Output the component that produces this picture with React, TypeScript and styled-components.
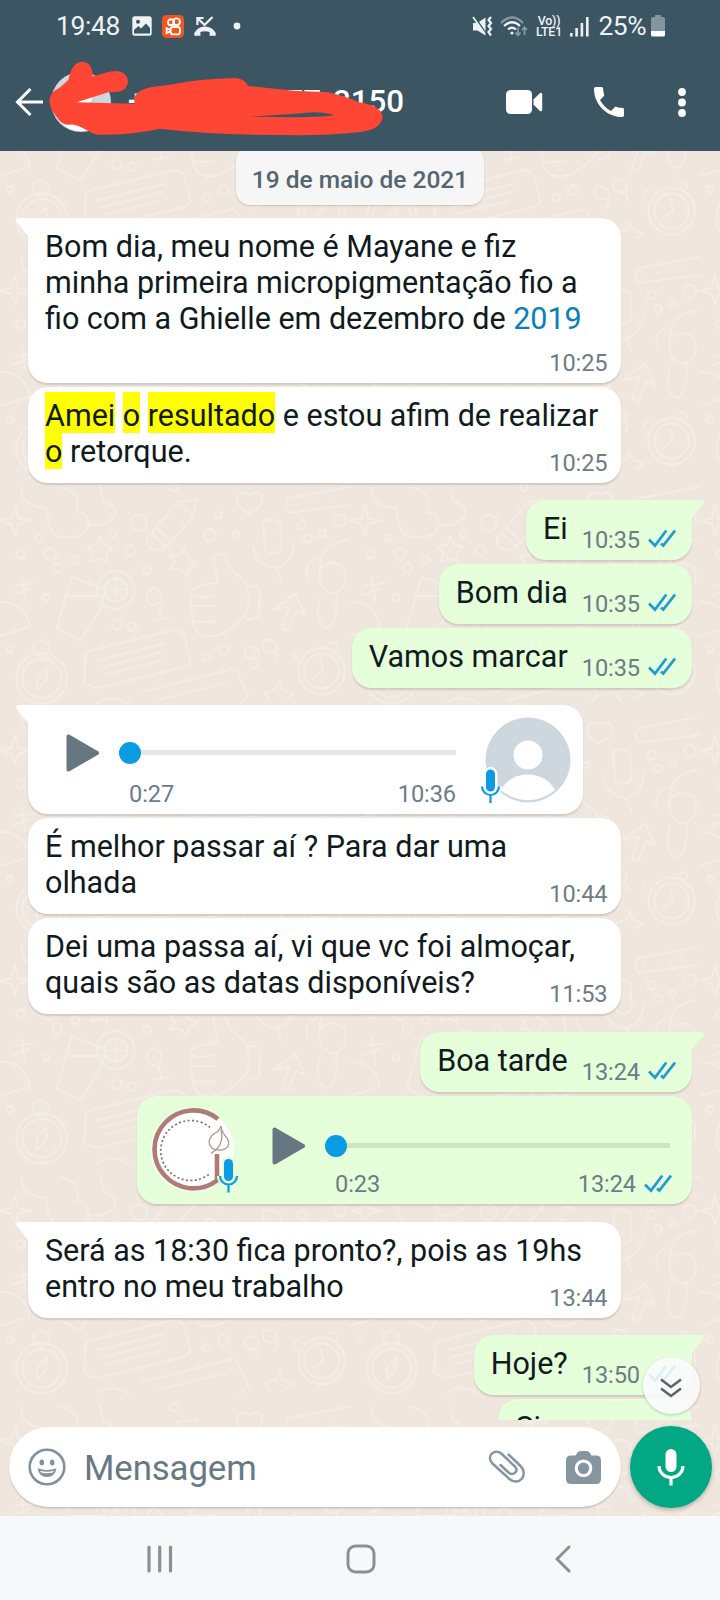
import React from 'react';
import styled, { createGlobalStyle, css } from 'styled-components';

const GlobalStyle = createGlobalStyle`
  *, *::before, *::after { box-sizing: border-box; }
  body { margin: 0; background: #f6f8fa; }
  svg { display: block; flex: none; }
`;

const Screen = styled.div`
  width: 720px;
  height: 1600px;
  display: flex;
  flex-direction: column;
  overflow: hidden;
  font-family: Roboto, 'Liberation Sans', sans-serif;
  color: #101a20;
`;

/* ---------- Header ---------- */

const Header = styled.header`
  position: relative;
  flex: none;
  height: 151px;
  background: #3b5563;
  color: #fff;
`;

const StatusBar = styled.div`
  display: flex;
  align-items: center;
  height: 52px;
  padding: 0 55px 0 56px;
  color: #eef2f4;
`;

const Clock = styled.span`
  width: 76px;
  font-size: 26.4px;
  letter-spacing: -0.35px;
`;

const StatusGroup = styled.div<{ $push?: boolean }>`
  display: flex;
  align-items: center;
  gap: 10px;
  ${(p) => p.$push && css`margin-left: auto; gap: 7px;`}
`;

const Volte = styled.div`
  display: flex;
  flex-direction: column;
  align-items: center;
  width: 27px;
  font-size: 12.4px;
  line-height: 11.5px;
  font-weight: 500;
  letter-spacing: -0.2px;
  white-space: nowrap;
`;

const BatteryText = styled.span`
  font-size: 26.4px;
  letter-spacing: -0.5px;
  margin-left: 2px;
  margin-right: -2px;
`;

const Toolbar = styled.div`
  display: flex;
  align-items: center;
  height: 99px;
  padding: 1px 34px 0 15px;
`;

const Avatar = styled.div`
  width: 60px;
  height: 60px;
  margin-left: 7px;
`;

const Title = styled.h1`
  flex: 1;
  display: flex;
  align-items: baseline;
  margin: -1px 0 0 17px;
  font-size: 31.3px;
  line-height: 40px;
  font-weight: 500;
`;

const TitlePart = styled.span<{ $gap?: number }>`
  margin-left: ${(p) => p.$gap ?? 0}px;
`;

const Actions = styled.div`
  display: flex;
  align-items: center;
`;

const Action = styled.div<{ $gap?: number }>`
  margin-left: ${(p) => p.$gap ?? 0}px;
`;

const Marker = styled.svg`
  position: absolute;
  left: 0;
  top: 0;
`;

/* ---------- Chat ---------- */

const Chat = styled.main`
  position: relative;
  flex: none;
  height: 1365px;
  background: #efe6de;
  display: flex;
  flex-direction: column;
`;

const Wallpaper = styled.svg`
  position: absolute;
  inset: 0;
`;

const Messages = styled.section`
  position: relative;
  flex: none;
  height: 1269px;
  overflow: hidden;
  display: flex;
  flex-direction: column;
  padding: 0 28px;
`;

const DatePill = styled.div`
  flex: none;
  align-self: center;
  width: 248px;
  height: 58px;
  margin-top: -4px;
  padding-top: 17px;
  border-radius: 14px;
  background: #f6f6f6;
  box-shadow: 0 1px 2px rgba(0, 0, 0, 0.16);
  color: #54656f;
  font-size: 24.5px;
  line-height: 32px;
  font-weight: 500;
  text-align: center;
  white-space: nowrap;
`;

const BubbleBox = styled.article<{ $out?: boolean; $tail?: boolean; $mt: number }>`
  position: relative;
  flex: none;
  margin-top: ${(p) => p.$mt}px;
  border-radius: 20px;
  background: ${(p) => (p.$out ? '#e4ffd9' : '#ffffff')};
  box-shadow: 0 1.5px 1.5px rgba(60, 50, 40, 0.16);
  align-self: ${(p) => (p.$out ? 'flex-end' : 'flex-start')};
  ${(p) => p.$tail && (p.$out ? 'border-top-right-radius: 0;' : 'border-top-left-radius: 0;')}
`;

const InBubble = styled(BubbleBox)<{ $h: number }>`
  display: grid;
  width: 593px;
  height: ${(p) => p.$h}px;
  padding: 10.5px 13.5px 6.5px 17px;
  > :not(svg) { grid-area: 1 / 1; }
`;

const OutBubble = styled(BubbleBox)`
  display: flex;
  height: 60px;
  padding: 10.5px 16px 6.5px 17px;
`;

const Text = styled.p`
  margin: 0;
  font-size: 30.5px;
  line-height: 36px;
  white-space: nowrap;
`;

const Mark = styled.mark`
  background: #ffff00;
  color: inherit;
  padding-top: 6px;
`;

const Link = styled.span`
  color: #0b80b8;
`;

const Time = styled.span`
  font-size: 23.6px;
  line-height: 28px;
  color: #6d7c85;
  letter-spacing: -0.1px;
`;

const Meta = styled.div`
  display: flex;
  align-self: end;
  justify-self: end;
  align-items: center;
  gap: 8px;
`;

const OutMeta = styled(Meta)`
  margin-left: 14px;
`;

const TailSvg = styled.svg<{ $out?: boolean }>`
  position: absolute;
  top: 0;
  ${(p) => (p.$out ? 'right: -12px; transform: scaleX(-1);' : 'left: -12px;')}
`;

const TickSvg = styled.svg`
  margin-bottom: 2px;
`;

const VoiceBubble = styled(BubbleBox)<{ $h: number }>`
  display: flex;
  width: 555px;
  height: ${(p) => p.$h}px;
`;

const PlaySlot = styled.div<{ $left: number; $top: number }>`
  margin-left: ${(p) => p.$left}px;
  padding-top: ${(p) => p.$top}px;
  width: 34px;
`;

const Player = styled.div<{ $w: number; $top: number }>`
  width: ${(p) => p.$w}px;
  margin-left: 30px;
  display: flex;
  flex-direction: column;
  padding-top: ${(p) => p.$top}px;
`;

const Track = styled.div<{ $out?: boolean }>`
  position: relative;
  height: 5px;
  background: ${(p) => (p.$out ? '#cde6c3' : '#e6e6e6')};
  &::before {
    content: '';
    position: absolute;
    left: -11px;
    top: -8.5px;
    width: 22px;
    height: 22px;
    border-radius: 50%;
    background: #0a9be2;
  }
`;

const PlayerTimes = styled.div<{ $top: number; $shift?: number }>`
  display: flex;
  justify-content: space-between;
  margin-top: ${(p) => p.$top}px;
  margin-left: -1px;
  margin-right: ${(p) => -(p.$shift ?? 0)}px;
`;

const VoiceAvatar = styled.div<{ $left: number; $top: number }>`
  margin-left: ${(p) => p.$left}px;
  margin-top: ${(p) => p.$top}px;
`;

const ScrollDown = styled.div`
  position: absolute;
  left: 642.5px;
  top: 1206px;
  width: 57px;
  height: 57px;
  border-radius: 50%;
  background: rgba(250, 251, 250, 0.88);
  box-shadow: 0 1px 3px rgba(0, 0, 0, 0.22);
  display: flex;
  align-items: center;
  justify-content: center;
  padding-top: 5px;
`;

/* ---------- Composer and navigation ---------- */

const Composer = styled.footer`
  position: relative;
  display: flex;
  align-items: flex-start;
  gap: 9px;
  padding: 6px 7px 0 9px;
`;

const InputPill = styled.div`
  display: flex;
  align-items: center;
  width: 612px;
  height: 80px;
  margin-top: 1px;
  padding: 0 20px 0 19px;
  border-radius: 40px;
  background: #fff;
  box-shadow: 0 1.5px 1.5px rgba(60, 50, 40, 0.2);
`;

const Placeholder = styled.span`
  flex: 1;
  margin-left: 18px;
  font-size: 34.8px;
  color: #687983;
  margin-top: 1px;
  letter-spacing: -0.1px;
`;

const ClipSlot = styled.div`
  margin-right: 40px;
`;

const MicButton = styled.div`
  width: 82px;
  height: 82px;
  border-radius: 50%;
  background: #02a884;
  display: flex;
  align-items: center;
  justify-content: center;
  box-shadow: 0 2px 4px rgba(0, 0, 0, 0.25);
`;

const NavBar = styled.nav`
  flex: none;
  height: 84px;
  background: #f6f8fa;
  display: flex;
  align-items: center;
  padding: 2px 149px 0 146.5px;
`;

const NavItem = styled.div<{ $gap?: number }>`
  margin-left: ${(p) => p.$gap ?? 0}px;
`;

/* ---------- Icons ---------- */

const Ticks = () => (
  <TickSvg width="28" height="19" viewBox="0 0 28 19" fill="none" stroke="#1f9bd0" strokeWidth="2.7">
    <path d="M1 10.5 L7 16.6 L18.3 1.5 M13 14.5 L15.3 16.6 L27 1.5" />
  </TickSvg>
);

const Tail = ({ out }: { out?: boolean }) => (
  <TailSvg $out={out} width="13" height="21" viewBox="0 0 13 21">
    <path d="M13 0 H2 Q-.6 .6 .6 4 L12 18 V21 H13Z" fill={out ? '#e4ffd9' : '#fff'} />
  </TailSvg>
);

const Play = () => (
  <svg width="34" height="38" viewBox="0 0 34 38">
    <path d="M2.5 2.5 V35.5 L31 19Z" fill="#667781" stroke="#667781" strokeWidth="4" strokeLinejoin="round" />
  </svg>
);

const SmallMic = ({ x, y, halo }: { x: number; y: number; halo: string }) => (
  <g transform={`translate(${x} ${y})`}>
    <rect x="5" y="0" width="9" height="22" rx="4.5" fill={halo} stroke={halo} strokeWidth="5" />
    <path d="M1 17 A8.5 8.5 0 0 0 18 17 M9.5 26 V33.5" fill="none" stroke={halo} strokeWidth="6" />
    <rect x="5" y="0" width="9" height="22" rx="4.5" fill="#0a9be2" />
    <path d="M1 17 A8.5 8.5 0 0 0 18 17 M9.5 26 V33.5" fill="none" stroke="#0a9be2" strokeWidth="2.2" />
  </g>
);

const ContactAvatar = () => (
  <svg width="91" height="92" viewBox="0 0 91 92">
    <circle cx="48" cy="43" r="42.5" fill="#cfd7de" />
    <circle cx="48" cy="38" r="14.5" fill="#fff" />
    <path d="M21 73 Q29 58 48 57.5 Q67 58 75 73 A41 41 0 0 1 21 73Z" fill="#fff" />
    <SmallMic x={1} y={52.5} halo="#fff" />
  </svg>
);

const BrandAvatar = () => (
  <svg width="90" height="87" viewBox="0 0 90 87">
    <circle cx="41.5" cy="42" r="41.5" fill="#fff" />
    <path d="M67 11 A39 39 0 1 0 66 72.5 V46" fill="none" stroke="#b07b77" strokeWidth="4.6" />
    <path d="M59 19.5 A30 30 0 1 0 59 65.5" fill="none" stroke="#7d7476" strokeWidth="1.7" strokeDasharray="2 2.4" />
    <path
      d="M70 18 Q71 25 76 30 Q81 39 71 42 Q59 43 58 34 Q59 27 66 24 Q69 22 70 18 M70 22 Q73 33 66 41 L60 45.5"
      fill="none"
      stroke="#ad9691"
      strokeWidth="1.3"
    />
    <SmallMic x={68} y={51} halo="#e4ffd9" />
  </svg>
);

const GalleryIcon = () => (
  <svg width="20" height="20" viewBox="0 0 20 20">
    <rect x=".3" y=".3" width="19.4" height="19.4" rx="2.5" fill="#eef2f4" />
    <path d="M2 17.5 V14 L6.5 10 L9 12.5 L14 7.5 L18 12 V17.5Z" fill="#3b5563" />
    <circle cx="6" cy="5.8" r="2" fill="#3b5563" />
  </svg>
);

const KwaiIcon = () => (
  <svg width="22" height="23" viewBox="0 0 22 23" fill="none" stroke="#fff" strokeWidth="1.9">
    <rect width="22" height="23" rx="4.5" fill="#f2541b" stroke="none" />
    <circle cx="9" cy="7.2" r="3" />
    <circle cx="14.6" cy="6.8" r="3.4" />
    <rect x="8.6" y="12" width="9.4" height="7.4" rx="2.4" />
    <path d="M8.4 15 L4.6 13.2 V18 L8.4 16.4" />
  </svg>
);

const MissedIcon = () => (
  <svg width="22" height="21" viewBox="0 0 22 21">
    <path d="M3.4 9 V2 H9.6 M4 2.5 L10.5 9 L18.5 1" fill="none" stroke="#eef2f4" strokeWidth="2.2" />
    <path
      d="M.3 17 Q3.6 10.6 11 10.4 Q18.4 10.6 21.7 17 V19.8 H15.6 V16 Q11 14.6 6.4 16 V19.8 H.3Z"
      fill="#eef2f4"
    />
  </svg>
);

const MuteIcon = () => (
  <svg width="21" height="21" viewBox="0 0 21 21" fill="none" stroke="#eef2f4">
    <path d="M1 7 H5.5 L13.5 1.5 V19.5 L5.5 14.5 H1Z" fill="#eef2f4" stroke="none" />
    <path d="M2 0 L15 19" stroke="#3b5563" strokeWidth="1.8" />
    <path d="M1 1 L13 18" strokeWidth="1.7" />
    <path d="M19 1 L16.5 4 L19 7 L16.5 10 L19 13 L16.5 16 L19 19.5" strokeWidth="2.2" />
  </svg>
);

const WifiIcon = () => (
  <svg width="29" height="23" viewBox="0 0 29 23" fill="none" stroke="#eef2f4" strokeWidth="2.2">
    <path d="M1 8 Q12 -3 23 8" stroke="#8b9aa3" />
    <path d="M4 11 Q12 3.5 20 11 M8 14.5 Q12 11 16 14.5" />
    <circle cx="12" cy="18" r="1.6" fill="#eef2f4" stroke="none" />
    <path d="M18 12.5 V20 M15.5 17.5 L18 20.5 L20.5 17.5 M24.5 20 V12 M22 15 L24.5 12 L27 15" stroke="#8b9aa3" strokeWidth="1.7" />
  </svg>
);

const SignalIcon = () => (
  <svg width="20" height="21" viewBox="0 0 20 21" fill="#eef2f4">
    <rect x="0" y="17" width="2.6" height="3.5" />
    <rect x="5.3" y="12" width="2.6" height="8.5" />
    <rect x="10.6" y="7" width="2.6" height="13.5" />
    <rect x="16" y="1" width="2.6" height="19.5" />
  </svg>
);

const BatteryIcon = () => (
  <svg width="14" height="22" viewBox="0 0 14 22">
    <path d="M4 0 H10 V2 H12 Q14 2 14 4 V16 H0 V4 Q0 2 2 2 H4Z" fill="#8395a0" />
    <path d="M0 16 H14 V20 Q14 21.6 12 21.6 H2 Q0 21.6 0 20Z" fill="#fff" />
  </svg>
);

const BackArrow = () => (
  <svg width="29" height="28" viewBox="0 0 29 28" fill="none" stroke="#fff" strokeWidth="3">
    <path d="M28 14 H2.5 M15.5 1 L2.5 14 L15.5 27" />
  </svg>
);

const HeaderAvatar = () => (
  <svg width="60" height="60" viewBox="0 0 60 60">
    <circle cx="30" cy="30" r="30" fill="#cfd7de" />
    <circle cx="31" cy="25" r="10" fill="#fff" />
    <path d="M8 49 Q12 39 30 38.5 Q48 39 52 49 A29 29 0 0 1 8 49Z" fill="#fff" />
  </svg>
);

const VideoIcon = () => (
  <svg width="37" height="24" viewBox="0 0 37 24" fill="#fff">
    <rect width="26" height="24" rx="4.5" />
    <path d="M27.5 9.5 L34 3 Q36.2 2 36.2 4.5 V19.5 Q36.2 22 34 21 L27.5 14.5Z" />
  </svg>
);

const PhoneIcon = () => (
  <svg width="30" height="30" viewBox="3 3 18 18" fill="#fff">
    <path d="M6.62 10.79c1.44 2.83 3.76 5.14 6.59 6.59l2.2-2.2c.27-.27.67-.36 1.02-.24 1.12.37 2.33.57 3.57.57.55 0 1 .45 1 1V20c0 .55-.45 1-1 1-9.39 0-17-7.61-17-17 0-.55.45-1 1-1h3.5c.55 0 1 .45 1 1 0 1.25.2 2.45.57 3.57.11.35.03.74-.25 1.02l-2.2 2.2z" />
  </svg>
);

const MoreIcon = () => (
  <svg width="8" height="29" viewBox="0 0 8 29" fill="#fff">
    <circle cx="4" cy="4" r="3.9" />
    <circle cx="4" cy="14.5" r="3.9" />
    <circle cx="4" cy="25" r="3.9" />
  </svg>
);

const SmileIcon = () => (
  <svg width="38" height="38" viewBox="0 0 38 38">
    <circle cx="19" cy="19" r="17.3" fill="none" stroke="#8092a0" strokeWidth="2.6" />
    <ellipse cx="13.8" cy="14.6" rx="2.3" ry="3" fill="#8092a0" />
    <ellipse cx="24.2" cy="14.6" rx="2.3" ry="3" fill="#8092a0" />
    <path d="M9.5 20.3 Q19 23.5 28.5 20.3 Q27 29 19 29 Q11 29 9.5 20.3Z" fill="#8092a0" />
    <path d="M12.2 22.7 Q19 24.7 25.8 22.7 L25 24.6 Q19 26 13 24.6Z" fill="#fff" />
  </svg>
);

const ClipIcon = () => (
  <svg width="38" height="34" viewBox="0 0 38 34" fill="none" stroke="#8696a0" strokeWidth="2.5" strokeLinecap="round">
    <path d="M20.5 4.5 L32.5 16 C41 24.5 31 37 21.5 29 L4.5 13.5 C-2.5 6.5 6.5 -2.5 13.5 3.8 L27 16.5 C31 21 25.5 26.5 20.5 22.5 L12.5 15" />
  </svg>
);

const CameraIcon = () => (
  <svg width="35" height="33" viewBox="0 0 35 33">
    <path d="M11.5 1.5 Q12.5 0 14.5 0 H20.5 Q22.5 0 23.5 1.5 L25.5 4.5 H30 Q35 4.5 35 9.5 V28 Q35 33 30 33 H5 Q0 33 0 28 V9.5 Q0 4.5 5 4.5 H9.5Z" fill="#8696a0" />
    <circle cx="17.5" cy="17.3" r="7.3" fill="none" stroke="#fff" strokeWidth="3" />
  </svg>
);

const BigMic = () => (
  <svg width="28" height="37" viewBox="0 0 28 37">
    <rect x="8.5" y="0" width="11" height="23" rx="5.5" fill="#fff" />
    <path d="M2 17 A12 11.5 0 0 0 26 17 M14 28 V36.5" fill="none" stroke="#fff" strokeWidth="3.2" />
  </svg>
);

const ChevronsDown = () => (
  <svg width="22" height="20" viewBox="0 0 22 20" fill="none" stroke="#54656f" strokeWidth="2.5">
    <path d="M1 1.5 L11 9 L21 1.5 M1 10.5 L11 18 L21 10.5" />
  </svg>
);

/* Faint line drawings repeated behind the conversation. */
const Doodles = () => (
  <Wallpaper width="720" height="1365">
    <defs>
      <pattern id="doodles" width="1050" height="690" patternUnits="userSpaceOnUse" patternTransform="translate(0 329) scale(.3333)">
        <g fill="none" stroke="#f4ece6" strokeWidth="6" strokeLinejoin="round" strokeLinecap="round">
          <path d="M65 20 Q60 80 140 85 Q140 180 205 172 Q270 170 265 125 Q260 95 230 95 Q250 35 180 20 M300 15 L310 65 Q350 75 345 105 Q330 140 270 135" />
          <path d="M45 75 L55 115 L95 122 L55 132 L45 165 L35 132 L0 122 L35 115Z" />
          <path d="M535 65 L590 60 L580 110 L490 210 Q440 215 440 175Z M535 65 L580 110 M470 145 L515 185 M455 160 L500 200" />
          <path d="M745 100 Q705 75 712 50 Q730 30 750 45 Q775 25 788 55 Q785 85 745 100Z" />
          <path d="M1050 20 L865 55 Q850 80 865 98 L1050 75 M885 76 h2 M920 70 h2 M955 65 h2 M990 58 h2" />
          <path d="M790 125 Q815 110 840 130 L845 205 Q825 235 795 210Z M760 195 Q765 255 825 265 Q880 250 882 185 M830 265 L845 305" />
          <path d="M300 170 L312 195 L340 200 L320 220 L322 245 L298 235 L272 245 L280 218 L262 200 L290 195Z" />
          <path d="M555 202 L562 232 L592 250 L568 262 L560 290 L542 268 L512 268 L525 245 L508 225 L535 228Z" />
          <path d="M215 290 L320 330 L300 390 L240 482 L170 445Z M195 348 L315 348" />
          <circle cx="347" cy="330" r="57" />
          <circle cx="347" cy="330" r="34" />
          <path d="M347 298 V362 M315 330 H379 M325 308 L369 352 M369 308 L325 352" strokeWidth="4" />
          <path d="M462 322 Q500 345 478 370 Q450 385 440 355 Q440 335 462 322 M475 380 L485 412 M462 420 L505 412" />
          <path d="M655 310 L640 235 Q660 205 678 235 Q685 270 735 305 Q755 350 740 400 Q690 460 640 468 Q590 475 580 430 Q565 340 575 330 Q600 310 655 310 M575 378 H645 M580 425 H645 M645 345 Q600 355 575 345 M742 320 Q785 310 780 350 L778 410 L740 420" />
          <path d="M820 390 L885 340 L915 405 L888 392 L865 452 L845 446 L868 380 Z" />
          <path d="M960 265 Q955 195 1040 180 M925 300 Q905 250 950 235 M960 270 Q985 235 1030 260 Q1055 320 1000 342 Q950 330 960 270 M960 350 Q940 430 980 445 Q1015 430 1010 340" />
          <circle cx="125" cy="595" r="76" />
          <circle cx="125" cy="595" r="58" />
          <circle cx="123" cy="505" r="24" />
          <path d="M140 562 L138 600 L110 630 L112 590Z" />
          <path d="M258 515 L520 450 Q550 450 555 475 L572 545 L555 560 L290 625 L252 610Z M295 540 L490 492 M305 562 L485 516 M315 583 L480 542" />
          <path d="M430 635 L695 568 Q715 570 720 595 L745 645 L720 670 M475 660 L680 608" />
          <circle cx="965" cy="573" r="70" />
          <circle cx="965" cy="573" r="52" />
          <path d="M960 535 L970 570 L940 595 M890 540 Q870 520 895 510 M985 492 Q1010 475 1012 505" />
          <path d="M735 505 Q725 545 770 535 Q785 565 760 565 M790 485 Q785 525 825 515 Q840 540 825 542 M735 505 Q750 490 775 510 V535 M790 485 Q805 470 828 490 V515" />
          <path d="M45 318 L105 310 M65 290 L75 360 M40 345 L90 325 M838 605 L850 630 L882 640 L858 655 M838 605 L828 630 L795 640 L812 665" />
          <path d="M0 365 Q75 365 90 440 L0 468 M290 670 Q330 640 385 670" />
          {[
            [417, 128, 24], [117, 174, 10], [62, 222, 13], [150, 222, 18], [226, 240, 12], [172, 264, 14], [391, 212, 15],
            [441, 270, 12], [655, 105, 10], [630, 165, 18], [708, 165, 10], [905, 135, 13], [1020, 122, 18], [924, 176, 12],
            [967, 160, 10], [138, 352, 10], [351, 434, 15], [395, 440, 13], [620, 532, 11], [670, 510, 15], [30, 508, 10],
            [340, 162, 10], [522, 22, 12],
          ].map(([x, y, r]) => (
            <circle key={`${x}-${y}`} cx={x} cy={y} r={r} />
          ))}
        </g>
      </pattern>
    </defs>
    <rect width="720" height="1365" fill="url(#doodles)" />
  </Wallpaper>
);

const RedScribble = () => (
  <Marker width="400" height="151" viewBox="0 0 1200 453">
    <path
      fill="#ff4634"
      fillRule="evenodd"
      d="M205 240 Q216 184 248 185 Q278 188 278 229 L325 216 Q346 210 362 215 Q384 224 384 246 Q380 275 348 276 L325 277 L230 307 L404 311 L402 295 Q410 268 460 260 L505 255 Q600 236 705 234 Q735 236 744 258 L880 272 L985 277 Q1040 290 1075 306 Q1147 318 1148 352 Q1142 390 1080 396 Q960 408 860 405 Q640 405 478 386 Q400 405 290 404 Q275 400 255 388 Q230 372 205 374 Q183 374 170 350 Q146 325 149 297 Q152 274 178 264Z M745 350 Q870 344 940 337 Q985 338 1003 346 Q950 352 870 352Z"
    />
  </Marker>
);

/* ---------- Message parts ---------- */

interface IncomingProps {
  mt: number;
  h?: number;
  tail?: boolean;
  time: string;
  children: React.ReactNode;
}

const Incoming = ({ mt, h = 96, tail, time, children }: IncomingProps) => (
  <InBubble $mt={mt} $h={h} $tail={tail}>
    {tail && <Tail />}
    <Text>{children}</Text>
    <Meta>
      <Time>{time}</Time>
    </Meta>
  </InBubble>
);

const Outgoing = ({ mt, tail, time, text }: { mt: number; tail?: boolean; time: string; text: string }) => (
  <OutBubble $out $mt={mt} $tail={tail}>
    {tail && <Tail out />}
    <Text>{text}</Text>
    <OutMeta>
      <Time>{time}</Time>
      <Ticks />
    </OutMeta>
  </OutBubble>
);

export default function App() {
  return (
    <Screen>
      <GlobalStyle />
      <Header>
        <StatusBar>
          <Clock>19:48</Clock>
          <StatusGroup>
            <GalleryIcon />
            <KwaiIcon />
            <MissedIcon />
            <svg width="24" height="8" viewBox="0 0 24 8">
              <circle cx="11" cy="4" r="3.4" fill="#eef2f4" />
            </svg>
          </StatusGroup>
          <StatusGroup $push>
            <MuteIcon />
            <WifiIcon />
            <Volte>
              <span>Vo))</span>
              <span>LTE1</span>
            </Volte>
            <SignalIcon />
            <BatteryText>25%</BatteryText>
            <BatteryIcon />
          </StatusGroup>
        </StatusBar>
        <Toolbar>
          <BackArrow />
          <Avatar>
            <HeaderAvatar />
          </Avatar>
          <Title>
            <TitlePart>+</TitlePart>
            <TitlePart $gap={140}>77</TitlePart>
            <TitlePart $gap={12}>3150</TitlePart>
          </Title>
          <Actions>
            <Action>
              <VideoIcon />
            </Action>
            <Action $gap={51}>
              <PhoneIcon />
            </Action>
            <Action $gap={54}>
              <MoreIcon />
            </Action>
          </Actions>
        </Toolbar>
        <RedScribble />
      </Header>

      <Chat>
        <Doodles />
        <Messages>
          <DatePill>19 de maio de 2021</DatePill>
          <Incoming mt={13} h={165} tail time="10:25">
            Bom dia, meu nome é Mayane e fiz
            <br />
            minha primeira micropigmentação fio a
            <br />
            fio com a Ghielle em dezembro de <Link>2019</Link>
          </Incoming>
          <Incoming mt={4} time="10:25">
            <Mark>Amei</Mark> <Mark>o</Mark> <Mark>resultado</Mark> e estou afim de realizar
            <br />
            <Mark>o</Mark> retorque.
          </Incoming>
          <Outgoing mt={17} tail time="10:35" text="Ei" />
          <Outgoing mt={4} time="10:35" text="Bom dia" />
          <Outgoing mt={4} time="10:35" text="Vamos marcar" />

          <VoiceBubble $mt={17} $h={109} $tail>
            <Tail />
            <PlaySlot $left={38} $top={28.5}>
              <Play />
            </PlaySlot>
            <Player $w={326} $top={45}>
              <Track />
              <PlayerTimes $top={25}>
                <Time>0:27</Time>
                <Time>10:36</Time>
              </PlayerTimes>
            </Player>
            <VoiceAvatar $left={24} $top={11.5}>
              <ContactAvatar />
            </VoiceAvatar>
          </VoiceBubble>

          <Incoming mt={4} time="10:44">
            É melhor passar aí ? Para dar uma
            <br />
            olhada
          </Incoming>
          <Incoming mt={4} time="11:53">
            Dei uma passa aí, vi que vc foi almoçar,
            <br />
            quais são as datas disponíveis?
          </Incoming>
          <Outgoing mt={18} tail time="13:24" text="Boa tarde" />

          <VoiceBubble $out $mt={4} $h={108}>
            <VoiceAvatar $left={14} $top={12}>
              <BrandAvatar />
            </VoiceAvatar>
            <PlaySlot $left={31} $top={31}>
              <Play />
            </PlaySlot>
            <Player $w={334} $top={47}>
              <Track $out />
              <PlayerTimes $top={22} $shift={2}>
                <Time>0:23</Time>
                <Meta>
                  <Time>13:24</Time>
                  <Ticks />
                </Meta>
              </PlayerTimes>
            </Player>
          </VoiceBubble>

          <Incoming mt={18} tail time="13:44">
            Será as 18:30 fica pronto?, pois as 19hs
            <br />
            entro no meu trabalho
          </Incoming>
          <Outgoing mt={17} tail time="13:50" text="Hoje?" />
          <Outgoing mt={4} time="13:50" text="Sim" />
        </Messages>
        <ScrollDown>
          <ChevronsDown />
        </ScrollDown>
        <Composer>
          <InputPill>
            <SmileIcon />
            <Placeholder>Mensagem</Placeholder>
            <ClipSlot>
              <ClipIcon />
            </ClipSlot>
            <CameraIcon />
          </InputPill>
          <MicButton>
            <BigMic />
          </MicButton>
        </Composer>
      </Chat>

      <NavBar>
        <NavItem>
          <svg width="26" height="28" viewBox="0 0 26 28" stroke="#8f8f8f" strokeWidth="3.2" strokeLinecap="round">
            <path d="M2 2 V26 M12.7 2 V26 M23.5 2 V26" />
          </svg>
        </NavItem>
        <NavItem $gap={173}>
          <svg width="30" height="30" viewBox="0 0 30 30" fill="none" stroke="#8f8f8f" strokeWidth="3">
            <rect x="2" y="2" width="26" height="26" rx="7.5" />
          </svg>
        </NavItem>
        <NavItem $gap={179}>
          <svg width="16" height="28" viewBox="0 0 16 28" fill="none" stroke="#8f8f8f" strokeWidth="3" strokeLinecap="round">
            <path d="M14 2 L2 14 L14 26" />
          </svg>
        </NavItem>
      </NavBar>
    </Screen>
  );
}
